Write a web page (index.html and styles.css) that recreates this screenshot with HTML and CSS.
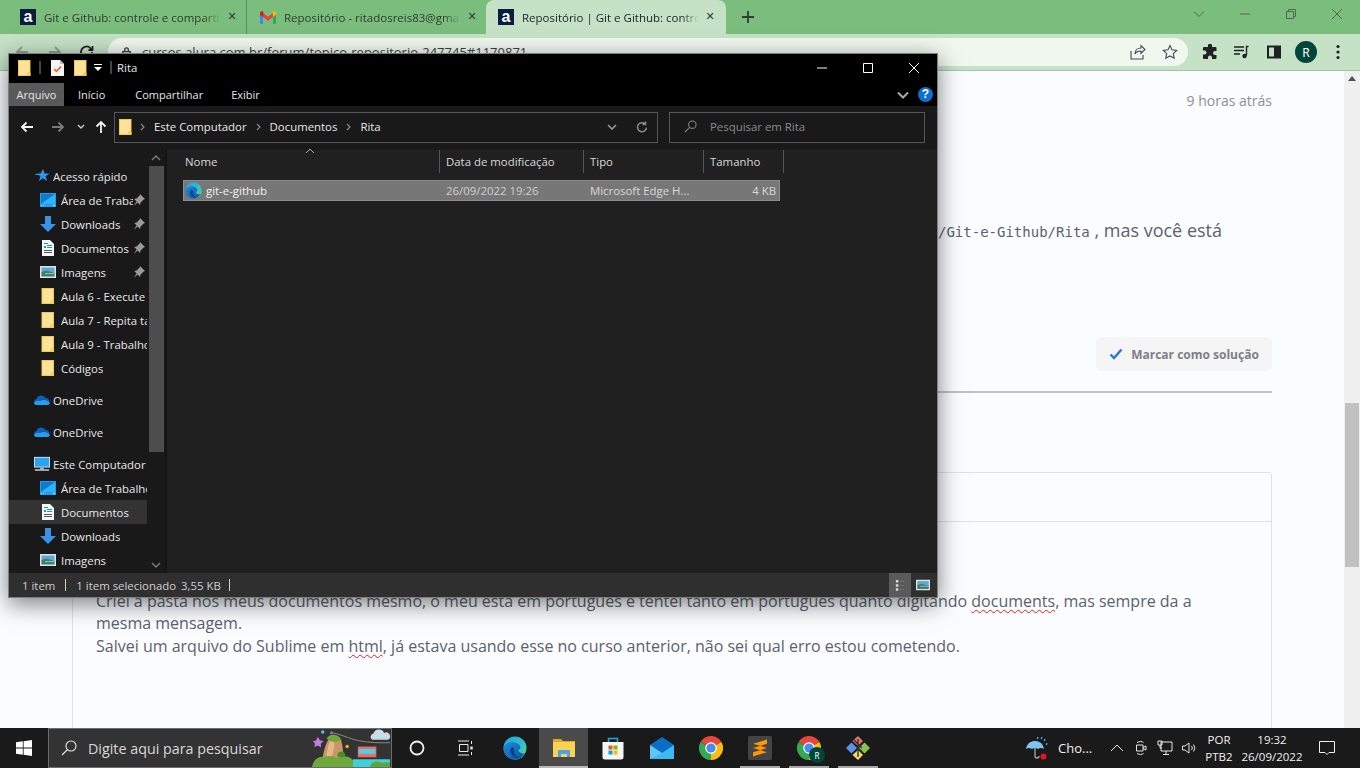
FILE: index.html
```html
<!DOCTYPE html>
<html lang="pt-BR">
<head>
<meta charset="utf-8">
<title>Repositório | Git e Github</title>
<link rel="stylesheet" href="styles.css">
</head>
<body>
<svg class="defs" width="0" height="0" aria-hidden="true">
  <defs>
    <linearGradient id="edgeA" x1="0" y1="0" x2="1" y2="1"><stop offset="0" stop-color="#1fa3e0"/><stop offset=".6" stop-color="#35c1c8"/><stop offset="1" stop-color="#5fdc6f"/></linearGradient>
    <linearGradient id="edgeB" x1="0" y1="0" x2="1" y2="1"><stop offset="0" stop-color="#1f8fdc"/><stop offset="1" stop-color="#0b4f9c"/></linearGradient>
    <symbol id="folder" viewBox="0 0 13 16"><path fill="#f2c84f" d="M0 0h12.500v16H0z"/><path fill="#fde39a" d="M1 1h10.500v11.500H9V15H1z"/><path fill="#f6cf60" d="M9.500 13h3v2.500h-3z"/></symbol>
    <symbol id="checkdoc" viewBox="0 0 13 16"><path fill="#f4f4f4" d="M0 0h9l4 4v12H0z"/><path fill="#bbb" d="M9 0l4 4H9z"/><path fill="none" stroke="#e8632c" stroke-width="1.600" d="M3 9l2.400 2.400L10 6.600"/></symbol>
    <symbol id="desktop" viewBox="0 0 16 14"><path fill="#1aa0f2" d="M0 0h16v14H0z"/><path fill="#0c7cd0" d="M1 1h14v10H1z"/><path fill="#2fb3ff" d="M1 11L15 1v10z"/><path fill="#d8f0ff" d="M1 12h1v1H1zM3 12h1v1H3zM13 12h2v1h-2z"/></symbol>
    <symbol id="download" viewBox="0 0 16 16"><path fill="#3a93e6" d="M5 0h6v8h5l-8 8-8-8h5z"/></symbol>
    <symbol id="docs" viewBox="0 0 12 16"><path fill="#f6f6f6" d="M0 0h8l4 4v12H0z"/><path fill="#1d8ee0" d="M2 3h4v1H2zM5 5h5v1H5zM2 6h2v2H2zM5 7h5v1H5z"/><path fill="#555" d="M2 10h8v1H2zM2 12h8v1H2z"/></symbol>
    <symbol id="picture" viewBox="0 0 16 12"><path fill="#dfe3e6" d="M0 0h16v12H0z"/><path fill="#5fa8d8" d="M1.500 1.500h13v6h-13z"/><path fill="#3f7f6c" d="M1.500 6l5-1.500 8 2.500v3.500h-13z"/><path fill="#8fc0b0" d="M5 7h9v1H5z"/></symbol>
    <symbol id="pin" viewBox="0 0 12 12"><path fill="#9a9a9a" d="M7 0l5 5-1.400.6-3 3L7 11 1.200 5 3.600 4.400l3-3zM3.400 7.600l1 1L1 12z"/></symbol>
    <symbol id="star" viewBox="0 0 16 14"><path fill="#2f97ea" d="M9 0l1.600 4.400H15.500l-3.900 2.900 1.500 4.700L9 9.200 4.900 12l1.500-4.700-1.800-1.300H0l3.200-.8H0l4-.8h2.600z"/></symbol>
    <symbol id="cloud" viewBox="0 0 16 10"><path fill="#0a62b8" d="M3 10a3 3 0 0 1-.6-5.900A5 5 0 0 1 11.600 3 3.600 3.600 0 0 1 13 10z"/><path fill="#2a9bee" d="M0 8.200C1 6 3.500 5.400 6 6.200 8.500 4.500 13 4.600 16 8c-.3 1.200-1.400 2-3 2H3C1.600 10 .5 9.300 0 8.200z"/></symbol>
    <symbol id="pc" viewBox="0 0 18 16"><path fill="#dce6ee" d="M0 0h18v12H0z"/><path fill="#2aa3f0" d="M1 1h16v10H1z"/><path fill="#bbb" d="M7 12h4v2H7z"/><path fill="#dce6ee" d="M1 14h16v1.500H1z"/></symbol>
    <symbol id="edge" viewBox="0 0 24 24"><circle cx="12" cy="12" r="11.500" fill="url(#edgeA)"/><path fill="url(#edgeB)" d="M.6 12.500C.8 9 5 5.500 10 6c4.500.4 8 3.400 7.300 6.300-.5 1.300-1.700 1.700-2.300 1.300 1 3.400 4 4.700 6.800 3.300-2 3.700-5.600 6.600-9.800 6.600-6.300 0-11.400-4.800-11.400-11z"/><path fill="#0b3f86" d="M9.500 11c-2.600 1.500-3 5-.6 8 1.600 2 4.800 3.300 8 2.500-3.300-.2-6-3.200-5.700-6.500.1-1.500-.6-3-1.700-4z"/></symbol>
    <symbol id="chrome" viewBox="0 0 24 24"><path fill="#e8453c" d="M12 12L1.600 6A12 12 0 0 1 22.400 6z"/><path fill="#f9bc15" d="M12 12L22.400 6A12 12 0 0 1 12 24z"/><path fill="#34a853" d="M12 12L12 24A12 12 0 0 1 1.600 6z"/><circle cx="12" cy="12" r="5.800" fill="#fff"/><circle cx="12" cy="12" r="4.600" fill="#4a8af4"/></symbol>
  </defs>
</svg>

<div class="screen">
  <header class="browser">
    <div class="tabstrip">
      <div class="tab">
        <span class="tab-logo">a</span><span class="tab-title">Git e Github: controle e comparti</span><span class="tab-close">✕</span>
      </div>
      <div class="tab tab--sep">
        <svg class="tab-icon" viewBox="0 0 16 14"><path fill="#4285f4" d="M0 3h3v11H1a1 1 0 0 1-1-1z"/><path fill="#34a853" d="M13 3h3v10a1 1 0 0 1-1 1h-2z"/><path fill="#ea4335" d="M3 3v4l5 3.700L13 7V3L8 6.700z"/><path fill="#c5221f" d="M0 3.500C0 1.500 2 .6 3.300 1.500L3 7 0 4.800z"/><path fill="#fbbc04" d="M16 3.500c0-2-2-2.900-3.300-2L13 7l3-2.200z"/></svg>
        <span class="tab-title">Repositório - ritadosreis83@gma</span><span class="tab-close">✕</span>
      </div>
      <div class="tab tab--active">
        <span class="tab-logo">a</span><span class="tab-title">Repositório | Git e Github: contro</span><span class="tab-close">✕</span>
      </div>
      <svg class="new-tab" viewBox="0 0 14 14"><path d="M7 1v12M1 7h12"/></svg>
      <div class="win-ctrls">
        <svg viewBox="0 0 12 12"><path d="M1 3.500l5 5 5-5"/></svg>
        <svg viewBox="0 0 12 12"><path d="M1 6h10"/></svg>
        <svg viewBox="0 0 12 12"><path d="M1.500 3.500h7v7h-7zM3.500 3.500v-2h7v7h-2"/></svg>
        <svg viewBox="0 0 12 12"><path d="M1 1l10 10M11 1L1 11"/></svg>
      </div>
    </div>
    <div class="toolbar">
      <svg class="tool tool--dim tool--back" viewBox="0 0 16 16"><path d="M14 8H3M8 3L3 8l5 5"/></svg>
      <svg class="tool tool--dim tool--fwd" viewBox="0 0 16 16"><path d="M2 8h11M8 3l5 5-5 5"/></svg>
      <svg class="tool tool--reload" viewBox="0 0 16 16"><path d="M13 8a5.500 5.500 0 1 1-1.600-3.900L13.500 6M13.500 2v4h-4"/></svg>
      <div class="omnibox">
        <svg class="lock" viewBox="0 0 12 14"><path d="M2 6h8v7H2zM4 6V4a2 2 0 0 1 4 0v2"/></svg>
        <span class="url">cursos.alura.com.br/forum/topico-repositorio-247745#1170871</span>
        <svg class="omni-icon omni-icon--first" viewBox="0 0 16 16"><path d="M1 7v8h12v-4M5 10c0-4 3-6 6-6V1.500l4 4-4 4V7c-3 0-5 1-6 3z"/></svg>
        <svg class="omni-icon" viewBox="0 0 16 16"><path d="M8 1.500l2 4.300 4.700.6-3.400 3.200.9 4.700L8 12l-4.200 2.300.9-4.700L1.300 6.400 6 5.800z"/></svg>
      </div>
      <div class="tool-group">
        <svg class="ext" viewBox="0 0 16 16"><path fill="#202124" d="M6 1.500a2 2 0 0 1 4 0V3h3.500a1 1 0 0 1 1 1v3H13a2 2 0 0 0 0 4h1.500v3a1 1 0 0 1-1 1H10v-1.500a2 2 0 0 0-4 0V15H2a1 1 0 0 1-1-1v-3.500h1.500a2 2 0 0 0 0-4H1V4a1 1 0 0 1 1-1h4z"/></svg>
        <svg class="ext" viewBox="0 0 16 16"><path fill="none" stroke="#202124" stroke-width="1.400" d="M0 3h10M0 6.500h10M0 10h6"/><path fill="none" stroke="#202124" stroke-width="1.400" d="M14.500 2.500h-2v9"/><circle cx="10.500" cy="12" r="2.200" fill="#202124"/></svg>
        <svg class="ext" viewBox="0 0 16 16"><path fill="#202124" d="M1 1.500h14v13H1z"/><path fill="#c5e1c6" d="M3 3.500h5v9H3z"/></svg>
        <span class="avatar avatar--toolbar">R</span>
        <svg class="ext" viewBox="0 0 16 16"><circle cx="8" cy="2.500" r="1.600" fill="#202124"/><circle cx="8" cy="8" r="1.600" fill="#202124"/><circle cx="8" cy="13.500" r="1.600" fill="#202124"/></svg>
      </div>
    </div>
  </header>

  <main class="page">
    <div class="content">
      <div class="post-time">9 horas atrás</div>
      <p class="post-text"><code class="code">/Git-e-Github/Rita</code> , mas você está</p>
      <div class="post-actions">
        <button class="solution-btn">
          <svg viewBox="0 0 14 12"><path d="M1.500 6.500l3.500 3.500 7.500-8.500"/></svg>
          Marcar como solução
        </button>
      </div>
      <hr class="rule">
      <section class="card">
        <div class="card-head"></div>
        <div class="card-body">
          <p>Criei a pasta nos meus documentos mesmo, o meu está em português e tentei tanto em português quanto digitando <span class="spell">documents</span>, mas sempre da a mesma mensagem.</p>
          <p>Salvei um arquivo do Sublime em <span class="spell">html</span>, já estava usando esse no curso anterior, não sei qual erro estou cometendo.</p>
        </div>
      </section>
    </div>
    <div class="page-scroll">
      <svg class="page-scroll-up" viewBox="0 0 8 5"><path d="M4 0l4 5H0z"/></svg>
      <div class="page-scroll-thumb"></div>
    </div>
  </main>

  <footer class="taskbar">
    <div class="start">
      <svg viewBox="0 0 16 16"><path fill="#fff" d="M0 2.300L6.800 1.300v6.300H0zM7.600 1.200L16 0v7.600H7.600zM0 8.400h6.800v6.300L0 13.700zM7.600 8.400H16V16l-8.400-1.200z"/></svg>
    </div>
    <div class="search">
      <svg class="search-icon" viewBox="0 0 16 16"><circle cx="10" cy="6" r="5"/><path d="M6.500 9.500L1 15"/></svg>
      <span class="search-text">Digite aqui para pesquisar</span>
      <svg class="search-art" viewBox="0 0 80 39">
        <circle cx="11" cy="3" r="1.800" fill="#4fc3d9"/><circle cx="20" cy="4" r="1.600" fill="#8a68b8"/><circle cx="36" cy="18" r="1.800" fill="#f6a91e"/>
        <path fill="#c77ae0" d="M6 8l2 3.500 4 1-3 2.500.3 4L6 17l-3.500 1.500L3 15 1 12.500l3.200-.8z"/>
        <path fill="#c9dce6" d="M62 11a3.500 3.500 0 0 1 1-6.500A6 6 0 0 1 74 4a3.500 3.500 0 0 1 4 7z"/>
        <path fill="none" stroke="#8a8a8a" d="M20 4c6 0 18 6 28 8 10 2 22 2.500 32 2"/>
        <path fill="#c99766" d="M10 34C12 24 14 12 19 9c4-2 10-1 11 3 2 7 2 15 3 22z"/>
        <path fill="#e3b98c" d="M18 13c3-1 5 0 5 3-1 5-2 12-4 17h-5c1-8 2-15 4-20z"/>
        <path fill="#6ca83a" d="M15 10c2-5 12-6 15 1-4 3-11 3-15-1z"/>
        <path fill="#6ca83a" d="M0 39c1-7 7-12 13-10 3-2 9-2 12 1 4-3 14-3 17 2l1 7z"/>
        <path fill="#4c8d2e" d="M26 27a4 4 0 0 1 8 0c0 3-8 3-8 0z"/>
        <path fill="#3fd0d8" d="M42 31h38v8H42z"/><path fill="#5aa83a" d="M60 37c2-4 9-5 12-2 3-1 6-1 8 0v4H60z"/>
        <path stroke="#333" d="M56 14v5"/>
        <path fill="#f06a5e" d="M47 18h19v11H47z"/><path fill="#4fd0e6" d="M48 20.500h17v5H48z"/>
      </svg>
    </div>
    <div class="apps">
      <div class="app"><svg class="glyph-ring" viewBox="0 0 16 16"><circle cx="8" cy="8" r="6.500"/></svg></div>
      <div class="app"><svg class="glyph-line" viewBox="0 0 18 16"><path d="M1 1h11M1 15h11M2.500 4.500h8.500v7H2.500zM14.500 1v3M14.500 12v3"/><path d="M14.500 6.500v3" stroke-width="2.400"/></svg></div>
      <div class="app"><svg class="app-img" viewBox="0 0 24 24"><use href="#edge"/></svg></div>
      <div class="app app--active">
        <svg class="app-img" viewBox="0 0 24 24"><path fill="#e0a526" d="M1 3h8l2 2h12v4H1z"/><path fill="#fbd24f" d="M1 6h22v15H1z"/><path fill="#4da3e8" d="M6 14h12v7h-3v-3H9v3H6z"/></svg>
      </div>
      <div class="app"><svg class="app-img" viewBox="0 0 24 24"><path fill="none" stroke="#1fa8e0" stroke-width="1.600" d="M7.500 6V2.500h9V6"/><path fill="#f5f5f5" d="M1.500 6h21v15a2.500 2.500 0 0 1-2.500 2.500H4A2.500 2.500 0 0 1 1.500 21z"/><path fill="#f25022" d="M7.500 9.500h4v4h-4z"/><path fill="#7fba00" d="M12.500 9.500h4v4h-4z"/><path fill="#00a4ef" d="M7.500 14.500h4v4h-4z"/><path fill="#ffb900" d="M12.500 14.500h4v4h-4z"/></svg></div>
      <div class="app"><svg class="app-img" viewBox="0 0 24 24"><path fill="#0a6fc4" d="M0 9L12 1l12 8v14H0z"/><path fill="#3fb8f2" d="M0 9l12 8 12-8v14H0z"/><path fill="#7fd4f7" d="M0 23V9l12 8z" opacity=".5"/></svg></div>
      <div class="app"><svg class="app-img" viewBox="0 0 24 24"><use href="#chrome"/></svg></div>
      <div class="app app--open"><svg class="app-img" viewBox="0 0 24 24"><rect width="24" height="24" rx="2" fill="#444"/><path fill="#ff9800" d="M19 3.500v4.300L5 12V7.800zM5 12l14 4.200v-4.300L5 7.800zM19 12v4.200L5 20.500v-4.300z"/></svg></div>
      <div class="app app--open app--profile">
        <svg class="app-img" viewBox="0 0 24 24"><use href="#chrome"/></svg>
        <span class="avatar avatar--badge">R</span>
      </div>
      <div class="app app--open"><svg class="app-img" viewBox="0 0 24 24"><path fill="#5a93e8" d="M0 12l5.500-5.500L11 12l-5.500 5.500z"/><path fill="#e2736b" d="M6.500 5L12 0l5 5-5 5z"/><path fill="#8cc152" d="M13 12l5.500-5.500L24 12l-5.500 5.500z"/><path fill="#f6d76b" d="M6.500 19L12 14l5 5-5 5z"/><path fill="none" stroke="#333" stroke-width="1.400" d="M12 3v18M8 4l8 8M12 12l5 5"/></svg></div>
    </div>
    <div class="tray">
      <div class="weather">
        <svg class="weather-icon" viewBox="0 0 24 24"><path fill="#7cc4ee" d="M1 13C2 7 6 5 10 5s8 2 9 8c-2-1.500-4-1.500-6 0-2-1.500-4-1.500-6 0-2-1.500-4-1.500-6 0z"/><path fill="none" stroke="#aaa" stroke-width="1.300" d="M10 12v8a2 2 0 0 0 4 0"/><path stroke="#4fa8e0" stroke-width="1.300" d="M13 1l-.7 2M17 1l-.7 2M20 3l-.7 2M22 7l-.7 2"/><circle cx="18.500" cy="20.500" r="3" fill="#e81123"/></svg>
        <span>Cho...</span>
      </div>
      <svg class="tray-icon" viewBox="0 0 16 16"><path d="M2 11l6-6 6 6"/></svg>
      <svg class="tray-icon" viewBox="0 0 16 16"><path d="M3.500 5h6.500v6H3.500zM10 7.500l3-1.500v4l-3-1.500M4 2.500c2.500-1.300 5-1.300 6.500 0M4 13.500c2.500 1.300 5 1.300 6.500 0"/></svg>
      <svg class="tray-icon" viewBox="0 0 16 16"><path d="M4 2h11v9H4zM9 11v3M6 14.500h6M1 1h4v4H1zM3 5v3h2"/></svg>
      <svg class="tray-icon" viewBox="0 0 16 16"><path d="M1.500 6H4l4-3v10l-4-3H1.500zM10.500 6a3 3 0 0 1 0 4M12.500 4.500a5.500 5.500 0 0 1 0 7"/></svg>
      <div class="lang"><span>POR</span><span>PTB2</span></div>
      <div class="clock"><span>19:32</span><span>26/09/2022</span></div>
      <svg class="notify" viewBox="0 0 16 16"><path d="M.5 1.500h15v11H10l-2 2-2-2H.5z"/></svg>
    </div>
  </footer>
</div>

<section class="explorer">
  <div class="ex-title">
    <svg class="ic-folder"><use href="#folder"/></svg>
    <span class="qa-sep"></span>
    <svg class="ic-folder qa-doc"><use href="#checkdoc"/></svg>
    <svg class="ic-folder qa-next"><use href="#folder"/></svg>
    <svg class="qa-drop" viewBox="0 0 8 7"><path fill="#fff" d="M0 0h8v1H0zM0 3h8L4 7z"/></svg>
    <span class="qa-sep qa-sep--last"></span>
    <span class="ex-name">Rita</span>
    <div class="ex-ctrls">
      <svg viewBox="0 0 12 12"><path d="M1 6h10"/></svg>
      <svg viewBox="0 0 12 12"><path d="M1.500 1.500h9v9h-9z"/></svg>
      <svg viewBox="0 0 12 12"><path d="M1 1l10 10M11 1L1 11"/></svg>
    </div>
  </div>
  <div class="ex-ribbon">
    <span class="rib-tab rib-tab--file">Arquivo</span>
    <span class="rib-tab rib-tab--home">Início</span>
    <span class="rib-tab rib-tab--share">Compartilhar</span>
    <span class="rib-tab rib-tab--view">Exibir</span>
    <svg class="rib-chev" viewBox="0 0 12 8"><path d="M1 1.500l5 5 5-5"/></svg>
    <span class="rib-help">?</span>
  </div>
  <div class="ex-nav">
    <svg class="nav-btn" viewBox="0 0 14 14"><path d="M13 7H2M6.500 2.500L2 7l4.500 4.500"/></svg>
    <svg class="nav-btn nav-btn--off" viewBox="0 0 14 14"><path d="M1 7h11M7.500 2.500L12 7l-4.500 4.500"/></svg>
    <svg class="nav-small" viewBox="0 0 8 6"><path d="M1 1l3 3 3-3"/></svg>
    <svg class="nav-btn nav-btn--up" viewBox="0 0 14 14"><path d="M7 13V2M2.500 6.500L7 2l4.500 4.500"/></svg>
    <div class="addr">
      <svg class="ic-folder"><use href="#folder"/></svg>
      <svg class="crumb-sep" viewBox="0 0 5 8"><path d="M1 1l3 3-3 3"/></svg>
      <span>Este Computador</span>
      <svg class="crumb-sep" viewBox="0 0 5 8"><path d="M1 1l3 3-3 3"/></svg>
      <span>Documentos</span>
      <svg class="crumb-sep" viewBox="0 0 5 8"><path d="M1 1l3 3-3 3"/></svg>
      <span>Rita</span>
      <svg class="addr-chev" viewBox="0 0 10 6"><path d="M1 1l4 4 4-4"/></svg>
      <svg class="addr-refresh" viewBox="0 0 12 12"><path d="M10.500 6.500a4.500 4.500 0 1 1-1.500-3.700M9.500 .5v3h-3"/></svg>
    </div>
    <div class="ex-search">
      <svg viewBox="0 0 14 14"><circle cx="9" cy="5" r="4"/><path d="M6 8l-5 5"/></svg>
      <span>Pesquisar em Rita</span>
    </div>
  </div>
  <div class="ex-main">
    <aside class="side">
      <ul class="tree">
        <li class="node node--top"><svg class="ni"><use href="#star"/></svg><span class="node-label">Acesso rápido</span></li>
        <li class="node"><svg class="ni"><use href="#desktop"/></svg><span class="node-label node-label--pinned">Área de Traba</span><svg class="pin"><use href="#pin"/></svg></li>
        <li class="node"><svg class="ni"><use href="#download"/></svg><span class="node-label node-label--pinned">Downloads</span><svg class="pin"><use href="#pin"/></svg></li>
        <li class="node"><svg class="ni"><use href="#docs"/></svg><span class="node-label node-label--pinned">Documentos</span><svg class="pin"><use href="#pin"/></svg></li>
        <li class="node"><svg class="ni"><use href="#picture"/></svg><span class="node-label node-label--pinned">Imagens</span><svg class="pin"><use href="#pin"/></svg></li>
        <li class="node"><svg class="ni"><use href="#folder"/></svg><span class="node-label">Aula 6 - Execute</span></li>
        <li class="node"><svg class="ni"><use href="#folder"/></svg><span class="node-label">Aula 7 - Repita ta</span></li>
        <li class="node"><svg class="ni"><use href="#folder"/></svg><span class="node-label">Aula 9 - Trabalho</span></li>
        <li class="node"><svg class="ni"><use href="#folder"/></svg><span class="node-label">Códigos</span></li>
        <li class="node node--top node--gap"><svg class="ni"><use href="#cloud"/></svg><span class="node-label">OneDrive</span></li>
        <li class="node node--top node--gap"><svg class="ni"><use href="#cloud"/></svg><span class="node-label">OneDrive</span></li>
        <li class="node node--top node--gap"><svg class="ni"><use href="#pc"/></svg><span class="node-label">Este Computador</span></li>
        <li class="node"><svg class="ni"><use href="#desktop"/></svg><span class="node-label">Área de Trabalho</span></li>
        <li class="node node--sel"><svg class="ni"><use href="#docs"/></svg><span class="node-label">Documentos</span></li>
        <li class="node"><svg class="ni"><use href="#download"/></svg><span class="node-label">Downloads</span></li>
        <li class="node"><svg class="ni"><use href="#picture"/></svg><span class="node-label">Imagens</span></li>
      </ul>
      <div class="side-scroll">
        <svg viewBox="0 0 10 6"><path d="M1 5l4-4 4 4"/></svg>
        <div class="side-thumb"></div>
        <svg class="side-down" viewBox="0 0 10 6"><path d="M1 1l4 4 4-4"/></svg>
      </div>
    </aside>
    <div class="files">
      <div class="cols">
        <div class="col col--name">Nome<svg class="sort" viewBox="0 0 10 6"><path d="M1 5l4-4 4 4"/></svg></div>
        <div class="col col--date">Data de modificação</div>
        <div class="col col--type">Tipo</div>
        <div class="col col--size">Tamanho</div>
      </div>
      <div class="file-row">
        <div class="cell cell--name"><svg class="file-icon"><use href="#edge"/></svg>git-e-github</div>
        <div class="cell cell--date">26/09/2022 19:26</div>
        <div class="cell cell--type">Microsoft Edge H...</div>
        <div class="cell cell--size">4 KB</div>
      </div>
    </div>
  </div>
  <div class="ex-status">
    <span class="st-count">1 item</span>
    <span class="st-bar"></span>
    <span class="st-sel">1 item selecionado</span>
    <span class="st-size">3,55 KB</span>
    <span class="st-bar st-bar--end"></span>
    <div class="st-views">
      <span class="view view--on"><svg viewBox="0 0 12 14"><path fill="#ddd" d="M1 1h3v3H1zM1 6h3v3H1zM1 11h3v3H1z"/><path fill="#777" d="M6 2h5v1H6zM6 7h5v1H6zM6 12h5v1H6z"/></svg></span>
      <span class="view"><svg viewBox="0 0 14 12"><use href="#picture"/></svg></span>
    </div>
  </div>
</section>
</body>
</html>
```

FILE: styles.css
```css
* { box-sizing: border-box; }
html, body { margin: 0; height: 768px; overflow: hidden; }
body { font-family: "Open Sans", "Noto Sans", sans-serif; position: relative; background: #fbfcfe; }
.defs { display: block; height: 0; }
ul { list-style: none; margin: 0; padding: 0; }
p { margin: 0; }

.screen { height: 768px; display: flex; flex-direction: column; }

/* Browser chrome */
.browser { flex: none; }
.tabstrip { height: 34px; background: #7bbd7d; display: flex; padding-left: 6px; }
.tab { width: 240px; display: flex; align-items: center; padding: 0 7px 0 14px; font-size: 11.500px; color: #2e3d30; }
.tab--sep { border-left: 1px solid #5c8f5e; padding-left: 13px; }
.tab--active { background: #c5e1c6; border-radius: 8px 8px 0 0; padding-left: 12px; padding-right: 9px; color: #20282a; }
.tab-logo { width: 16px; height: 16px; flex: none; background: #0a1d3f; color: #fff; font: 700 16px/15px "Liberation Sans", sans-serif; text-align: center; }
.tab-icon { width: 16px; height: 14px; flex: none; }
.tab-title { flex: 1; margin-left: 8px; overflow: hidden; white-space: nowrap; -webkit-mask-image: linear-gradient(to right, #000 90%, transparent 100%); mask-image: linear-gradient(to right, #000 90%, transparent 100%); min-width: 0; }
.tab-close { width: 14px; flex: none; font: 700 11px/14px "DejaVu Sans", sans-serif; color: #2e3d30; text-align: center; margin-left: 4px; }
.new-tab { width: 14px; height: 14px; margin: 10px 0 0 15px; fill: none; stroke: #2e3d30; stroke-width: 1.800; }
.win-ctrls { margin-left: auto; display: flex; }
.win-ctrls svg { width: 46px; height: 12px; margin-top: 8px; fill: none; stroke: #4c6b4e; stroke-width: 1; }

.toolbar { height: 37px; background: #c5e1c6; border-bottom: 1px solid #a3c4a5; display: flex; align-items: center; padding: 0 0 3px 0; }
.tool { width: 16px; height: 16px; fill: none; stroke: #202124; stroke-width: 1.800; flex: none; margin-top: 3px; }
.tool--back { margin-left: 14px; }
.tool--fwd { margin-left: 17px; }
.tool--reload { margin-left: 16px; }
.tool--dim { stroke: #8aa08b; }
.omnibox { width: 1080px; height: 28px; margin-left: 13px; background: #eff7ef; border-radius: 14px; display: flex; align-items: center; padding-left: 13px; font-size: 13px; color: #3a3f42; margin-top: 3px; flex: none; }
.lock { width: 11px; height: 13px; fill: none; stroke: #3a3f42; stroke-width: 1.500; flex: none; }
.url { margin-left: 10px; white-space: nowrap; }
.omni-icon { width: 16px; height: 16px; fill: none; stroke: #454a4d; stroke-width: 1.100; flex: none; }
.omni-icon--first { margin-left: auto; margin-right: 16px; }
.omni-icon:last-child { margin-right: 10px; }
.tool-group { display: flex; align-items: center; margin-left: 14px; margin-top: 3px; }
.ext { width: 16px; height: 16px; flex: none; margin-right: 16px; }
.ext:last-child { margin-right: 0; }
.avatar { background: #00473a; color: #fff; border-radius: 50%; display: flex; align-items: center; justify-content: center; flex: none; font-family: "Noto Sans", sans-serif; }
.avatar--toolbar { width: 22px; height: 22px; font-size: 12px; margin: 0 13px 0 -3px; }

/* Page */
.page { flex: 1; min-height: 0; display: flex; background: #fbfcfe; overflow: hidden; }
.content { flex: 1; padding: 20px 72px 0; min-width: 0; }
.post-time { font-size: 14px; line-height: 20px; text-align: right; color: #8a909a; }
.post-text { margin: 108px 50px 0 0; height: 22px; line-height: 22px; font-size: 18px; text-align: right; color: #5a6270; white-space: nowrap; }
.code { font: 14px "DejaVu Sans Mono", monospace; color: #5a6270; }
.post-actions { margin-top: 96px; display: flex; justify-content: flex-end; }
.solution-btn { width: 176px; height: 34px; border: 0; background: #f5f5f5; border-radius: 6px; display: flex; align-items: center; justify-content: center; gap: 8px; font: 700 12px "Open Sans", sans-serif; color: #7b8189; padding: 0; }
.solution-btn svg { width: 14px; height: 12px; fill: none; stroke: #2a75e0; stroke-width: 2.400; }
.rule { margin: 20px 0 0; border: 0; height: 2px; background: #bfc3c8; }
.card { margin-top: 79px; border: 1px solid #dfe1e5; border-radius: 3px 3px 0 0; height: 400px; }
.card-head { height: 49px; border-bottom: 1px solid #dfe1e5; }
.card-body { padding: 68px 23px 0; font-size: 16px; line-height: 22.400px; color: #5a6270; }
.spell { text-decoration: underline wavy #e02020 1px; text-underline-offset: 2px; }
.page-scroll { width: 16px; flex: none; background: #f0f0f0; display: flex; flex-direction: column; align-items: center; padding-top: 5px; }
.page-scroll-up { width: 8px; height: 5px; fill: #505050; flex: none; }
.page-scroll-thumb { width: 14px; height: 164px; margin-top: 322px; background: #c1c1c1; flex: none; }

/* Taskbar */
.taskbar { height: 40px; flex: none; background: #1a1a1a; display: flex; color: #f0f0f0; }
.start { width: 48px; display: flex; align-items: center; justify-content: center; }
.start svg { width: 16px; height: 16px; }
.search { width: 344px; background: #333; border: 1px solid #6b6b6b; display: flex; align-items: center; overflow: hidden; flex: none; }
.search-icon { width: 16px; height: 16px; margin-left: 12px; fill: none; stroke: #e8e8e8; stroke-width: 1.100; flex: none; }
.search-text { margin-left: 11px; font-size: 14.300px; color: #d8d8d8; white-space: nowrap; }
.search-art { width: 80px; height: 38px; margin-left: auto; flex: none; }
.apps { display: flex; }
.app { width: 49px; display: flex; align-items: center; justify-content: center; position: relative; }
.app--active { background: #4a4a4a linear-gradient(#b8b8b8, #b8b8b8) center bottom / 100% 2px no-repeat; }
.app--open { background: linear-gradient(#a8a8a8, #a8a8a8) center bottom / 40px 2px no-repeat; }
.app-img { width: 24px; height: 24px; }
.glyph-ring { width: 16px; height: 16px; fill: none; stroke: #f0f0f0; stroke-width: 1.800; }
.glyph-line { width: 18px; height: 16px; fill: none; stroke: #e8e8e8; stroke-width: 1; }
.avatar--badge { width: 14px; height: 14px; font-size: 8px; position: absolute; left: 26px; top: 20px; box-shadow: 0 0 0 1px #00473a; }
.tray { margin-left: auto; display: flex; align-items: center; padding-right: 13px; font-size: 11.500px; }
.weather { width: 80px; display: flex; align-items: center; gap: 9px; font-size: 13px; }
.weather-icon { width: 24px; height: 24px; flex: none; }
.tray-icon { width: 16px; height: 16px; margin: 0 4px; fill: none; stroke: #e6e6e6; stroke-width: 1; flex: none; }
.lang { width: 36px; display: flex; flex-direction: column; align-items: center; line-height: 17px; }
.clock { width: 70px; display: flex; flex-direction: column; align-items: center; line-height: 17px; }
.notify { width: 16px; height: 16px; margin: 0 12px; fill: none; stroke: #f0f0f0; stroke-width: 1; flex: none; }

/* Explorer window */
.explorer { position: absolute; left: 8px; top: 53px; width: 930px; height: 545px; border: 1px solid #7f7f7f; display: flex; flex-direction: column; background: #191919; color: #e8e8e8; font-size: 11.400px; box-shadow: 0 6px 22px rgba(0,0,0,.5); }
.ex-title { height: 29px; flex: none; background: #000; display: flex; align-items: center; padding: 0 0 2px 9px; }
.ic-folder { width: 13px; height: 16px; flex: none; }
.qa-sep { width: 2px; height: 13px; background: #444; margin-left: 8px; flex: none; }
.qa-doc { margin-left: 10px; }
.qa-next { margin-left: 10px; }
.qa-drop { width: 8px; height: 7px; margin-left: 7px; flex: none; }
.qa-sep--last { margin-left: 8px; }
.ex-name { margin-left: 5px; }
.ex-ctrls { margin-left: auto; display: flex; }
.ex-ctrls svg { width: 46px; height: 12px; fill: none; stroke: #fff; stroke-width: 1; }
.ex-ribbon { height: 23px; flex: none; background: #000; display: flex; align-items: stretch; font-size: 11px; line-height: 23px; color: #e4e4e4; }
.rib-tab--file { width: 55px; background: #5a5a5a; text-align: center; }
.rib-tab--home { margin-left: 14px; }
.rib-tab--share { margin-left: 30px; }
.rib-tab--view { margin-left: 28px; }
.rib-chev { width: 12px; height: 8px; margin: 8px 0 0 auto; fill: none; stroke: #aaa; stroke-width: 2; flex: none; }
.rib-help { width: 15px; height: 15px; margin: 4px 4px 0 9px; background: #0d6fcf; border-radius: 50%; color: #fff; font: 700 12px/15px "Liberation Sans", sans-serif; text-align: center; flex: none; }
.ex-nav { height: 44px; flex: none; background: #191919; display: flex; align-items: center; padding: 0 0 2px 11px; }
.nav-btn { width: 14px; height: 14px; fill: none; stroke: #f2f2f2; stroke-width: 1.800; flex: none; }
.nav-btn--off { stroke: #7a7a7a; margin-left: 17px; }
.nav-small { width: 8px; height: 6px; margin-left: 12px; fill: none; stroke: #ccc; stroke-width: 1.400; flex: none; }
.nav-btn--up { margin-left: 9px; }
.addr { width: 544px; height: 31px; margin-left: 6px; border: 1px solid #555; display: flex; align-items: center; padding: 0 0 1px 4px; color: #e8e8e8; flex: none; }
.crumb-sep { width: 5px; height: 8px; margin: 0 9px; fill: none; stroke: #888; stroke-width: 1.200; flex: none; }
.addr .ic-folder + .crumb-sep { margin-left: 8px; }
.addr-chev { width: 10px; height: 6px; margin-left: auto; fill: none; stroke: #999; stroke-width: 1.600; flex: none; }
.addr-refresh { width: 12px; height: 12px; margin: 0 9px 0 19px; fill: none; stroke: #8a8a8a; stroke-width: 1.500; flex: none; }
.ex-search { width: 256px; height: 31px; margin-left: 11px; border: 1px solid #555; display: flex; align-items: center; padding: 0 0 1px 14px; color: #8a8a8a; gap: 13px; flex: none; }
.ex-search svg { width: 13px; height: 13px; fill: none; stroke: #8a8a8a; stroke-width: 1.100; }
.ex-main { flex: 1; min-height: 0; display: flex; }
.side { width: 156px; flex: none; display: flex; background: #191919; overflow: hidden; padding-top: 14px; }
.tree { width: 138px; flex: none; overflow: hidden; height: 410px; }
.node { height: 24px; display: flex; align-items: center; padding-left: 31px; white-space: nowrap; color: #e8e8e8; }
.ni { width: 16px; height: 16px; flex: none; }
.node-label { margin-left: 5px; overflow: hidden; }
.node-label--pinned { width: 72px; flex: none; }
.pin { width: 12px; height: 12px; flex: none; }
.node--top { padding-left: 25px; }
.node--top .node-label { margin-left: 3px; }
.node--gap { margin-top: 8px; }
.node--sel { background: #333; }
.side-scroll { width: 16px; margin: -14px 0 0 1px; flex: none; display: flex; flex-direction: column; align-items: center; padding-top: 5px; }
.side-scroll svg { width: 10px; height: 6px; fill: none; stroke: #777; stroke-width: 1.500; flex: none; }
.side-thumb { width: 15px; height: 286px; margin-top: 5px; background: #4d4d4d; flex: none; }
.side-down { margin-top: 110px; }
.files { flex: 1; background: #202020; border-left: 2px solid #141414; padding-left: 12px; min-width: 0; }
.cols { height: 23px; display: flex; color: #d8d8d8; }
.col { border-right: 1px solid #555; line-height: 23px; padding-left: 6px; position: relative; }
.col--name { width: 261px; }
.col--date { width: 144px; }
.col--type { width: 120px; }
.col--size { width: 80px; }
.sort { width: 10px; height: 6px; position: absolute; left: 126px; top: -2px; fill: none; stroke: #aaa; stroke-width: 1; }
.file-row { width: 597px; height: 21px; margin: 7px 0 0 4px; background: #777; border: 1px solid #8c8c8c; display: flex; align-items: center; color: #e4e4e4; }
.cell--name { width: 255px; display: flex; align-items: center; padding-left: 1px; gap: 4px; color: #f2f2f2; }
.file-icon { width: 17px; height: 17px; flex: none; }
.cell--date { width: 144px; padding-left: 7px; color: #cfcfcf; }
.cell--type { width: 120px; padding-left: 7px; color: #d8d8d8; }
.cell--size { width: 76px; padding-right: 3px; text-align: right; color: #d8d8d8; }
.ex-status { height: 24px; flex: none; background: #2f2f2f; display: flex; align-items: center; color: #cfcfcf; padding-left: 13px; }
.st-bar { width: 1px; height: 12px; background: #d0d0d0; margin-left: 10px; flex: none; }
.st-sel { margin-left: 10px; }
.st-size { margin-left: 5px; }
.st-bar--end { margin-left: 8px; }
.st-views { margin-left: auto; display: flex; align-items: center; padding-right: 3px; }
.view { width: 22px; height: 24px; display: flex; align-items: center; justify-content: center; }
.view svg { width: 14px; height: 12px; }
.view--on { background: #5a5a5a; margin-right: 1px; }
.view--on svg { width: 10px; height: 14px; }
```
